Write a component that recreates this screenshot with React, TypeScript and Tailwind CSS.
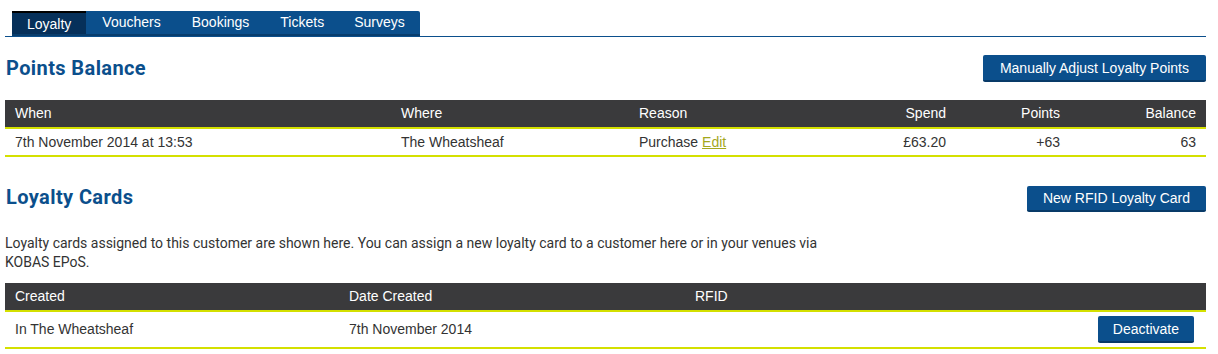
import React from 'react'

const tabs = ['Loyalty', 'Vouchers', 'Bookings', 'Tickets', 'Surveys']
const tabPad = ['px-[15px]', 'px-[16px]', 'px-[15px]', 'pl-[16px] pr-[15px]', 'px-[15px]']

function Button({ children, className = '' }: { children: React.ReactNode; className?: string }) {
  return (
    <button
      className={`bg-[#0b4f8c] text-white text-[14px] rounded-[2px] border-b-2 border-[#083a68] font-['Liberation_Sans',Arial,sans-serif] leading-none ${className}`}
    >
      {children}
    </button>
  )
}

export default function App() {
  return (
    <div className="w-[1218px] h-[354px] bg-white px-[5px] pt-[11px] font-['Liberation_Sans',Arial,sans-serif] text-[14px] text-[#333]">
      <div className="w-[1201px] border-b border-[#0b4f8c]">
        <div className="ml-[7px] flex w-fit bg-[#0b4f8c] rounded-t-[2px] border-b-2 border-[#083d6d]">
          {tabs.map((tab, i) => (
            <div
              key={tab}
              className={`h-[23px] pt-[2px] text-white leading-[18px] ${tabPad[i]} ${
                i === 0 ? 'bg-[#06305a] border-t-2 border-black' : ''
              }`}
            >
              {tab}
            </div>
          ))}
        </div>
      </div>

      <div className="w-[1201px] mt-[18px] flex items-center justify-between h-[27px]">
        <h2 className="font-['Roboto',sans-serif] font-bold text-[20px] tracking-[0.4px] text-[#0b4f8c] pl-px -mt-[2px]">Points Balance</h2>
        <Button className="h-[27px] px-[17px]">Manually Adjust Loyalty Points</Button>
      </div>

      <table className="w-[1201px] mt-[18px] border-collapse">
        <thead>
          <tr className="bg-[#3a3a3c] text-white border-b-2 border-[#d4e000] h-[28px]">
            <th className="font-normal text-left pl-[10px] w-[396px]">When</th>
            <th className="font-normal text-left w-[238px]">Where</th>
            <th className="font-normal text-left w-[200px]">Reason</th>
            <th className="font-normal text-right w-[107px]">Spend</th>
            <th className="font-normal text-right w-[114px]">Points</th>
            <th className="font-normal text-right pr-[10px]">Balance</th>
          </tr>
        </thead>
        <tbody>
          <tr className="h-[28px] border-b-2 border-[#d4e000]">
            <td className="pl-[10px]">7th November 2014 at 13:53</td>
            <td>The Wheatsheaf</td>
            <td>
              Purchase <a className="text-[#a4a81c] underline">Edit</a>
            </td>
            <td className="text-right">£63.20</td>
            <td className="text-right">+63</td>
            <td className="text-right pr-[10px]">63</td>
          </tr>
        </tbody>
      </table>

      <div className="w-[1201px] mt-[28px] flex items-center justify-between h-[27px]">
        <h2 className="font-['Roboto',sans-serif] font-bold text-[20px] tracking-[0.4px] text-[#0b4f8c] pl-px -mt-[4px]">Loyalty Cards</h2>
        <Button className="h-[26px] px-[16px]">New RFID Loyalty Card</Button>
      </div>

      <p className="mt-[22px] w-[825px] font-['Roboto',sans-serif] text-[14px] leading-[19px] text-[#333]">
        Loyalty cards assigned to this customer are shown here. You can assign a new loyalty card to a customer here or in your venues via KOBAS EPoS.
      </p>

      <table className="w-[1201px] mt-[11px] border-collapse">
        <thead>
          <tr className="bg-[#3a3a3c] text-white border-b-2 border-[#d4e000] h-[28px]">
            <th className="font-normal text-left pl-[10px] w-[344px]">Created</th>
            <th className="font-normal text-left w-[346px]">Date Created</th>
            <th className="font-normal text-left w-[300px]">RFID</th>
            <th></th>
          </tr>
        </thead>
        <tbody>
          <tr className="h-[37px] border-b-2 border-[#d4e000]">
            <td className="pl-[10px]">In The Wheatsheaf</td>
            <td>7th November 2014</td>
            <td></td>
            <td className="text-right pr-[12px]">
              <Button className="h-[27px] px-[15px]">Deactivate</Button>
            </td>
          </tr>
        </tbody>
      </table>
    </div>
  )
}
